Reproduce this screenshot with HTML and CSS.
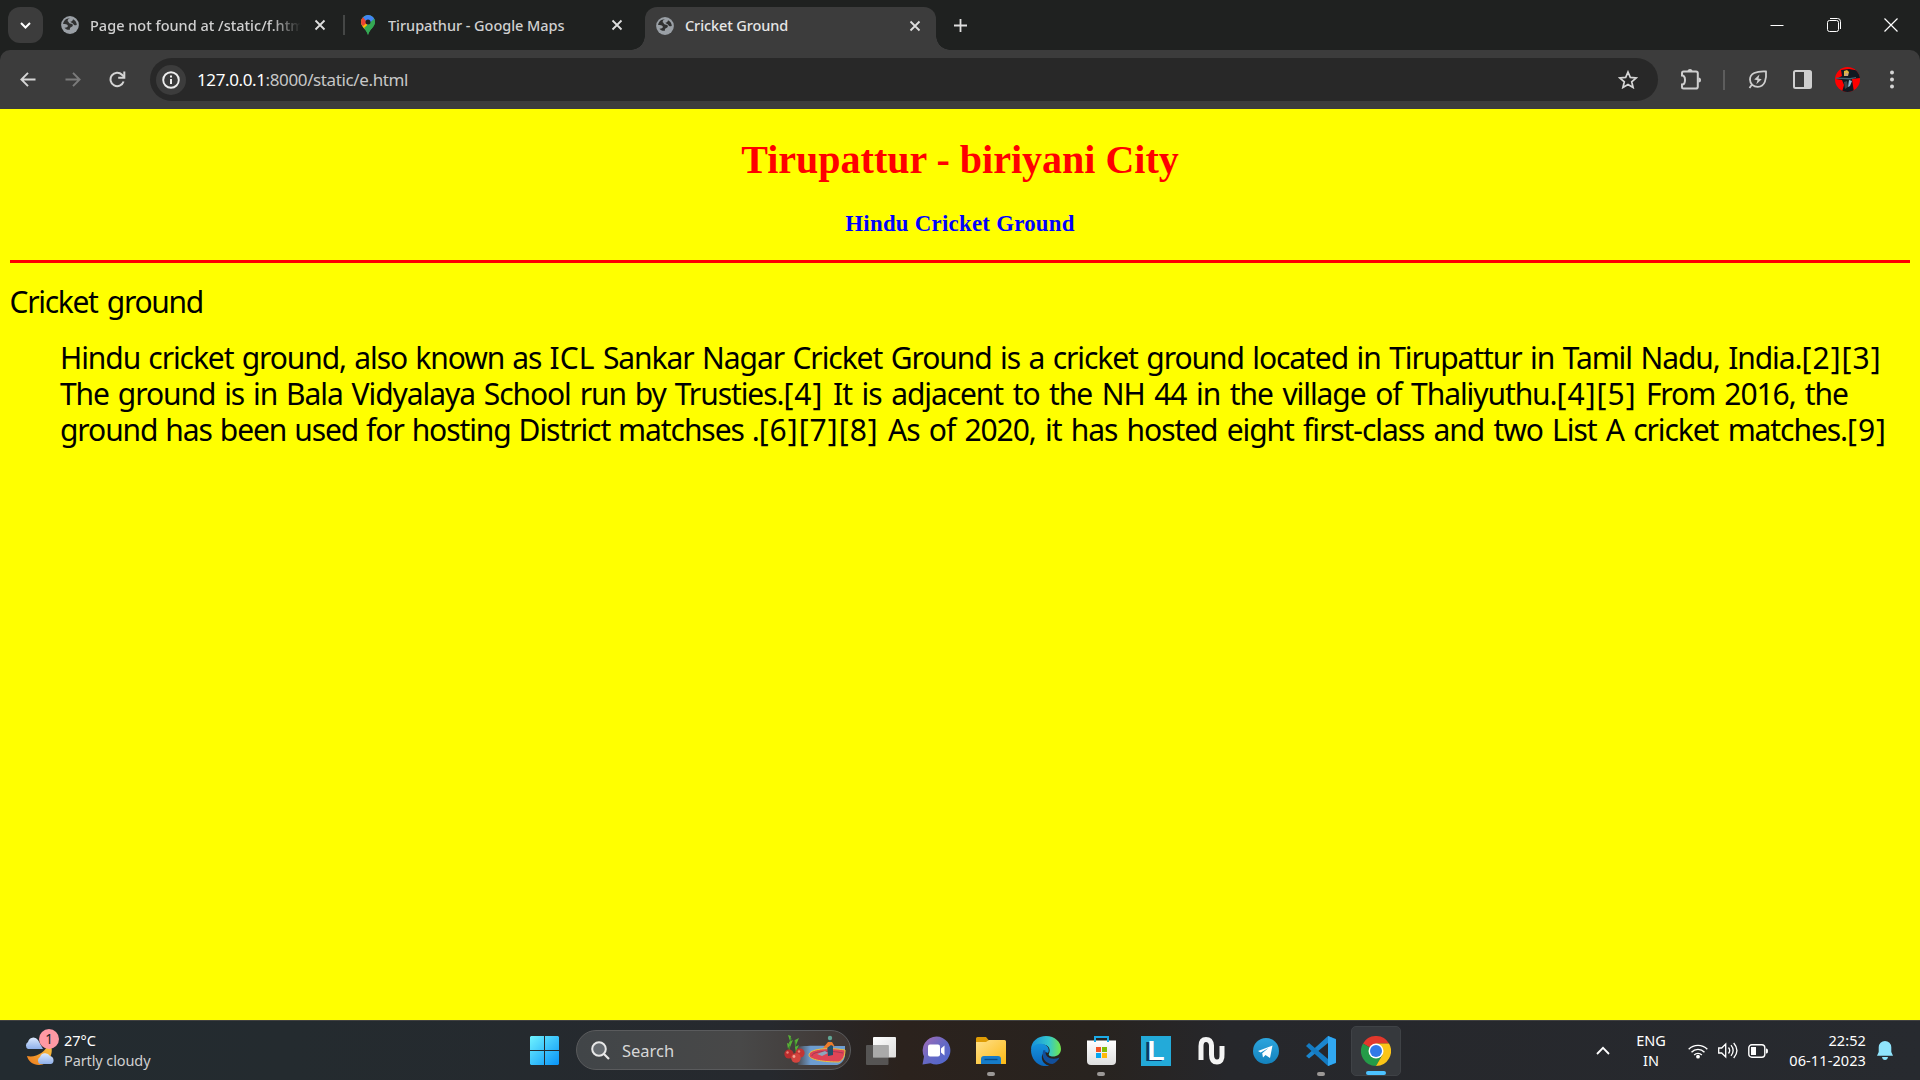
FILE: index.html
```html
<!DOCTYPE html>
<html lang="en">
<head>
<meta charset="utf-8">
<title>Cricket Ground</title>
<link rel="stylesheet" href="styles.css">
</head>
<body>
<svg class="defs" width="0" height="0">
  <defs>
    <symbol id="globe" viewBox="0 0 18 18"><circle cx="9" cy="9" r="8.9" fill="#9aa0a6"/><path d="M9 2.2c-1.9.6-2.5 1.9-2.3 3.1 1.5.3.7 2 2.2 2.3 1.900.2 3.300.4 2.900 2.200-.4 1.500-2.500 1.100-2.900 2.400l.1 1.400c-2 .6-4.400-.3-5.600-1.900 1.900.1 3.300-.4 3.500-1.900C6.500 8.200 4.100 8.100 2.100 8 2.300 4.900 5 2 9 2.200zM12 3.200c2.300 1 3.800 3.300 3.800 5.600-1.300 1-3 .4-3.500-.9-.5-1.200-2.800-.7-2.800-2.300 1.300 0 2.300-.9 2.500-2.400z" fill="#303131"/></symbol>
    <symbol id="x" viewBox="0 0 12 12"><path d="M1.500 1.500l9 9m0-9l-9 9" stroke="#dedede" stroke-width="1.800"/></symbol>
  </defs>
</svg>
<div class="screen">
  <header class="tabs">
    <div class="tab-search"><svg width="11" height="7" viewBox="0 0 11 7"><path d="M1 1l4.500 4.500L10 1" fill="none" stroke="#fff" stroke-width="2"/></svg></div>
    <div class="tab tab-one">
      <svg class="fav" width="18" height="18"><use href="#globe"/></svg>
      <span class="tab-title fade">Page not found at /static/f.htm</span>
      <svg class="close" width="12" height="12"><use href="#x"/></svg>
    </div>
    <i class="tab-sep"></i>
    <div class="tab tab-two">
      <svg class="fav" width="14" height="20" viewBox="0 0 14 20"><defs><clipPath id="pin"><path d="M7 0a7 7 0 0 1 7 7c0 5-5.500 7-7 13C5.500 14 0 12 0 7a7 7 0 0 1 7-7z"/></clipPath></defs><g clip-path="url(#pin)"><path fill="#34a853" d="M0 0h14v20H0z"/><path fill="#fbbc04" d="M0 4l10 3-7 9-5-5z"/><path fill="#ea4335" d="M0 0l7 7-5 4-4-3z"/><path fill="#4285f4" d="M2 2L7-1l7 3v3L7 12 5 6z"/><path fill="#34a853" d="M14 3v17H5L3 13z"/></g><circle cx="7" cy="7" r="2.500" fill="#202120"/></svg>
      <span class="tab-title">Tirupathur - Google Maps</span>
      <svg class="close" width="12" height="12"><use href="#x"/></svg>
    </div>
    <div class="tab active">
      <svg class="fav" width="18" height="18"><use href="#globe"/></svg>
      <span class="tab-title">Cricket Ground</span>
      <svg class="close" width="12" height="12"><use href="#x"/></svg>
    </div>
    <svg class="new-tab" width="13" height="13" viewBox="0 0 13 13"><path d="M6.500 0v13M0 6.500h13" stroke="#dedede" stroke-width="1.800"/></svg>
    <div class="window-buttons">
      <svg width="14" height="14" viewBox="0 0 14 14"><path d="M.5 7.500h13" stroke="#fff"/></svg>
      <svg width="14" height="14" viewBox="0 0 14 14"><rect x=".5" y="2.500" width="11" height="11" rx="2" fill="none" stroke="#fff"/><path d="M3 .5h7.500a3 3 0 0 1 3 3V11" fill="none" stroke="#fff"/></svg>
      <svg width="14" height="14" viewBox="0 0 14 14"><path d="M.5.5l13 13m0-13l-13 13" stroke="#fff" stroke-width="1.200"/></svg>
    </div>
  </header>
  <nav class="toolbar">
    <svg class="back" width="16" height="15" viewBox="0 0 16 15"><path d="M15.500 7.500H1.500M8 .8L1.400 7.500 8 14.200" fill="none" stroke="#d5d5d5" stroke-width="1.900"/></svg>
    <svg class="forward" width="16" height="15" viewBox="0 0 16 15"><path d="M.5 7.500h14M8 .8l6.600 6.700L8 14.200" fill="none" stroke="#7b7b7b" stroke-width="1.900"/></svg>
    <svg class="reload" width="17" height="17" viewBox="0 0 17 17"><path d="M14.600 10.500A6.700 6.700 0 1 1 13 3.700l2 2" fill="none" stroke="#d5d5d5" stroke-width="2"/><path d="M15.300.5v6.200H9.200" fill="none" stroke="#d5d5d5" stroke-width="2"/></svg>
    <div class="omnibox">
      <span class="info"><svg width="18" height="18" viewBox="0 0 18 18"><circle cx="9" cy="9" r="7.800" fill="none" stroke="#eee" stroke-width="1.900"/><path d="M9 8v5M9 4.600v2" stroke="#eee" stroke-width="2"/></svg></span>
      <span class="url"><b>127.0.0.1</b>:8000/static/e.html</span>
      <svg class="star" width="20" height="19" viewBox="0 0 20 19"><path d="M10 2l2.300 5.400 5.900.5-4.500 3.900 1.400 5.700L10 14.500l-5.100 3 1.400-5.700L1.800 7.900l5.900-.5z" fill="none" stroke="#d5d5d5" stroke-width="1.700"/></svg>
    </div>
    <svg class="ext" width="22" height="21" viewBox="0 0 22 21"><path d="M2 7V4.500Q2 3 3.500 3H16q1.800 0 1.800 1.800v13.400Q17.800 20 16 20H3.500Q2 20 2 18.500V16c4 0 4-9 0-9z" transform="translate(0 -.5)" fill="none" stroke="#cfcfcf" stroke-width="2"/><path d="M7.500 2.500a2.500 2.500 0 0 1 5 0zM18.500 8.500a2.500 2.500 0 0 1 0 5z" fill="#cfcfcf"/></svg>
    <i class="bar-sep"></i>
    <svg class="leaf" width="20" height="19" viewBox="0 0 20 19"><path d="M18 1.500c.6 7-.8 15.300-8.200 15.300C5.500 16.800 2 14 2 9.500 2 3.500 8 1 18 1.500zM3.800 14.800L1.500 18" fill="none" stroke="#cfcfcf" stroke-width="1.800"/><path d="M11.500 4.500L6.200 9.500l3.300.7-1.200 4 5.400-5-3.300-.8z" fill="#cfcfcf"/></svg>
    <svg class="panel" width="19" height="19" viewBox="0 0 19 19"><rect x="1" y="1" width="17" height="17" rx="1.500" fill="none" stroke="#cfcfcf" stroke-width="2"/><path d="M11 1h7v17h-7z" fill="#cfcfcf"/></svg>
    <svg class="avatar" width="25" height="25" viewBox="0 0 25 25"><defs><clipPath id="av"><circle cx="12.500" cy="12.500" r="12.500"/></clipPath></defs><g clip-path="url(#av)"><path fill="#f00" d="M0 0h25v25H0z"/><path fill="#101820" d="M6 3l8-1 11 2v7l-8 1 1 7 1 6H7l2-7-2-5-6-1 6-3z"/><path fill="#e0b53f" d="M9 4l3-1 2 2-1 4H9z"/><path fill="#cda27d" d="M10 6h3v3h-3z"/><path fill="#47616f" d="M1 10.500l14 .5 6-1v1l-6 1.500-14-.8z"/><path fill="#8eb8cf" d="M14 13l3 1-2 5-2 1z"/><path fill="#3b444a" d="M9 15l3-1 1 6-3 2z"/></g></svg>
    <svg class="more" width="4" height="19" viewBox="0 0 4 19" fill="#d5d5d5"><circle cx="2" cy="2.500" r="2"/><circle cx="2" cy="9.500" r="2"/><circle cx="2" cy="16.500" r="2"/></svg>
  </nav>
  <main class="page">
    <h1>Tirupattur - biriyani City</h1>
    <h3>Hindu Cricket Ground</h3>
    <hr>
    <p class="term">Cricket ground</p>
    <p class="text">
      <span class="w15">Hindu cricket ground, also known as <span class="caps">ICL</span></span><span class="w18"> Sankar Nagar Cricket Ground is a cricket ground located in Tirupattur in Tamil Nadu, India.</span><span class="cite">[2][3]</span><br>
      <span class="w22">The ground is in Bala Vidyalaya School run by Trusties.</span><span class="cite">[4]</span><span class="w29"> It is adjacent to the NH 44 in the village of Thaliyuthu.</span><span class="cite">[4][5]</span><span class="w25"> From 2016, the</span><br>
      <span class="w12">ground has been used for hosting District matchses .</span><span class="cite">[6][7][8]</span><span class="w26"> As of 2020, it has hosted eight first-class and two List A cricket matches.</span><span class="cite">[9]</span>
    </p>
  </main>
  <footer class="taskbar">
    <div class="weather">
      <div class="weather-icon">
        <svg width="32" height="30" viewBox="0 0 32 30"><defs><linearGradient id="moon" x1="1" y1="0" x2="0" y2="1"><stop stop-color="#f9c945"/><stop offset="1" stop-color="#ee7a1c"/></linearGradient><linearGradient id="cl" x1="0" y1="0" x2="0" y2="1"><stop stop-color="#dbe9fd"/><stop offset="1" stop-color="#8fb0ea"/></linearGradient></defs><path d="M25 5c7 9 0 23-10 23C9 28 4 24 3 19c8 2 19-3 22-14z" fill="url(#moon)"/><path d="M4 12a4 4 0 0 1 0-7 5.500 5.500 0 0 1 10-2l5 9z" fill="url(#cl)"/><path d="M16 27a4 4 0 0 1 0-7 5.500 5.500 0 0 1 10-1 4.200 4.200 0 0 1 1 8z" fill="url(#cl)"/></svg>
        <span class="badge">1</span>
      </div>
      <div class="weather-text"><div class="temp">27°C</div><div class="cond">Partly cloudy</div></div>
    </div>
    <div class="apps">
      <div class="app start"><svg width="29" height="29" viewBox="0 0 29 29"><defs><linearGradient id="win" x1="0" y1="0" x2="1" y2="1"><stop stop-color="#6ff3ff"/><stop offset="1" stop-color="#0893f7"/></linearGradient></defs><path d="M1 0h13v14H0V1zM15 0h13l1 1v13H15zM0 15h14v14H1l-1-1zM15 15h14v13l-1 1H15z" fill="url(#win)"/></svg></div>
      <div class="search">
        <svg class="lens" width="19" height="19" viewBox="0 0 19 19"><circle cx="8" cy="8" r="6.800" fill="#666b70" stroke="#e8e8e8" stroke-width="2"/><path d="M13 13l5 5" stroke="#e8e8e8" stroke-width="2.200"/></svg>
        <span class="search-label">Search</span>
        <svg class="art" width="62" height="33" viewBox="0 0 62 33"><defs><linearGradient id="sea"><stop stop-color="#78a4d2" stop-opacity="0"/><stop offset=".3" stop-color="#6d9dd0"/></linearGradient></defs><path d="M12 13c8-2 30-1 49-1v10c-1 5-4 8-8 9H14z" fill="url(#sea)"/><path d="M61 16c-18-3-36-1-36 5 0 5 15 7 30 7 4-2 6-6 6-12z" fill="#df4456" stroke="#eac43c"/><path d="M28 22c0-5 18-6 31-3" fill="none" stroke="#8e3855" stroke-width=".8"/><path d="M43 11l3-5 3 5v10l-5 1z" fill="#234e68"/><path d="M39 14l5-6h4l3 5-4-2-4 3z" fill="#ed7b2a"/><circle cx="46" cy="4" r="2.200" fill="#62a493"/><path d="M33 20l8-3 3 2-6 3z" fill="#8ca7bd"/><path d="M5 17L7 4m5 14l-1-12" stroke="#3b8a2f" stroke-width="1.200"/><path d="M4 1l3 1-1 5zM9 6l-4 2 1 5zM3 9l3 1-2 5zM15 4l-4 2 1 5zM15 11l-4 2 1 4z" fill="#59b336"/><circle cx="5" cy="20" r="4.600" fill="#b92d2e"/><circle cx="16" cy="19" r="4.600" fill="#c23533"/><circle cx="12" cy="24" r="4.800" fill="#d3443e"/><circle cx="10" cy="22.500" r="1.400" fill="#f3a594"/><circle cx="3.500" cy="18.500" r="1.200" fill="#e98375"/><circle cx="15" cy="17.500" r="1.200" fill="#e98375"/></svg>
      </div>
      <div class="app"><svg width="30" height="28" viewBox="0 0 30 28"><defs><linearGradient id="tv" x1="0" y1="0" x2="1" y2="1"><stop stop-color="#fff"/><stop offset="1" stop-color="#ddd"/></linearGradient></defs><rect x="7" y="0" width="23" height="20.500" rx="1" fill="url(#tv)"/><rect y="8" width="22.500" height="20" rx="1" fill="#666" fill-opacity=".75"/><rect x="7" y="8" width="15.500" height="12.500" fill="#aaa"/></svg></div>
      <div class="app"><svg width="29" height="29" viewBox="0 0 29 29"><defs><linearGradient id="chat" x1="0" y1="0" x2="1" y2="1"><stop stop-color="#a66bb5"/><stop offset=".5" stop-color="#6669c4"/><stop offset="1" stop-color="#4c66cf"/></linearGradient></defs><path d="M14.500.5a14 14 0 1 1-6 26.700L.5 28.500l1.500-8A14 14 0 0 1 14.500.5z" fill="url(#chat)"/><rect x="6" y="8.500" width="12" height="12" rx="2" fill="#fff"/><path d="M19 12.500l3.500-3v10l-3.500-3z" fill="#fff"/></svg></div>
      <div class="app"><svg width="30" height="27" viewBox="0 0 30 27"><defs><linearGradient id="fold" x1="0" y1="0" x2="1" y2="1"><stop stop-color="#ffe08a"/><stop offset="1" stop-color="#fbb914"/></linearGradient></defs><path d="M0 1.500Q0 0 1.500 0H10l3 3.500h15V8H0z" fill="#df9c05"/><path d="M0 5h10l3-2h15.500Q30 3 30 4.500V27H0z" fill="url(#fold)"/><path d="M5 27v-5q0-3 3-3h14q3 0 3 3v5z" fill="#167cc9"/><path d="M8.500 22.500h13" stroke="#064c87" stroke-width="1.300"/></svg><i class="run"></i></div>
      <div class="app"><svg width="30" height="30" viewBox="0 0 30 30"><defs><linearGradient id="e1"><stop stop-color="#1590dc"/><stop offset=".6" stop-color="#35c7cc"/><stop offset="1" stop-color="#72e748"/></linearGradient><linearGradient id="e2" x1="0" y1="0" x2="0" y2="1"><stop stop-color="#1594de"/><stop offset="1" stop-color="#0b67bd"/></linearGradient></defs><path d="M0 14C0 5 7 0 15 0c9 0 15 6 15 13 0 5-4 7.500-8 7.500-3 0-5-1-4-3 2-4 0-9-7-9-5 0-9 2-11 5.500z" fill="url(#e1)"/><path d="M0 14C2 8 8 7 12 8c5 1 7 6 5 9-3-2-7 1-6 6 1 4 4 6 7 6.700C8 32 0 24 0 14z" fill="url(#e2)"/><path d="M12.500 14c-3 7 2 14 9 14 3-1 6-4 7-6.500-7 3-15 .5-14-7z" fill="#124f9b"/></svg></div>
      <div class="app"><svg width="29" height="29" viewBox="0 0 29 29"><defs><linearGradient id="bag" x1="0" y1="0" x2="0" y2="1"><stop stop-color="#fff"/><stop offset="1" stop-color="#dedede"/></linearGradient></defs><path d="M0 4.500h29V25q0 4-4 4H4q-4 0-4-4z" fill="url(#bag)"/><path d="M8 6V1h13v5" fill="none" stroke="#1cabe7" stroke-width="2"/><path d="M9 11h5v5H9z" fill="#f35325"/><path d="M15 11h5v5h-5z" fill="#81bc06"/><path d="M9 17h5v5H9z" fill="#05a6f0"/><path d="M15 17h5v5h-5z" fill="#ffba08"/></svg><i class="run"></i></div>
      <div class="app"><span class="l-app">L</span></div>
      <div class="app"><svg width="27" height="28" viewBox="0 0 27 28"><path d="M3 23V9q0-6.500 5-6.500t5.500 6v9Q13.500 25 19 25t5-7.500V9" fill="none" stroke="#f4f4f4" stroke-width="5"/></svg></div>
      <div class="app"><svg width="26" height="26" viewBox="0 0 26 26"><defs><linearGradient id="tg" x1="0" y1="0" x2="0" y2="1"><stop stop-color="#2ca5de"/><stop offset="1" stop-color="#1482bd"/></linearGradient></defs><circle cx="13" cy="13" r="13" fill="url(#tg)"/><path d="M5 13l14.500-5.500L17 20l-4.500-3-2.500 2.500-.8-4.200L15.500 10l-7.800 4.500z" fill="#fff"/></svg></div>
      <div class="app"><svg width="30" height="30" viewBox="0 0 30 30"><path d="M22 0l8 3v24l-8 3V7L3 22.500 0 20z" fill="#1b86cf"/><path d="M0 10l3-3 19 16v7L0 10z" fill="#147bc2"/><path d="M22 0l8 3.500v23L22 30z" fill="#31a8f2"/></svg><i class="run"></i></div>
      <div class="app current"><svg width="30" height="30" viewBox="0 0 30 30"><path d="M15 15L2 7.500A15 15 0 0 1 28 7.500H15z" fill="#e2382c"/><path d="M15 15l6.500 3.700L15 30A15 15 0 0 1 2 7.500z" fill="#249b48"/><path d="M15 7.500h13A15 15 0 0 1 15 30l6.500-11.300z" fill="#fbc517"/><circle cx="15" cy="15" r="7.500" fill="#fff"/><circle cx="15" cy="15" r="6" fill="#3079e8"/></svg><i class="run"></i></div>
    </div>
    <div class="tray">
      <svg class="chev" width="14" height="9" viewBox="0 0 14 9"><path d="M1 8l6-6.200L13 8" fill="none" stroke="#fff" stroke-width="1.800"/></svg>
      <div class="lang"><div>ENG</div><div>IN</div></div>
      <svg class="wifi" width="20" height="16" viewBox="0 0 20 16"><path d="M.7 6.300a13 13 0 0 1 18.600 0M3.500 9.200a9 9 0 0 1 13 0M6.200 12a5.300 5.300 0 0 1 7.600 0" fill="none" stroke="#fff" stroke-width="1.400"/><circle cx="10" cy="13.700" r="1.900" fill="#fff"/></svg>
      <svg class="vol" width="20" height="17" viewBox="0 0 20 17"><path d="M.7 6v5h3l4 4V2l-4 4zM10.500 5.500q2.400 3 0 6M13 3.200q4.300 5.300 0 10.600M15.700 1q6.500 7.500 0 15" fill="none" stroke="#fff" stroke-width="1.300"/></svg>
      <svg class="bat" width="20" height="14" viewBox="0 0 20 14"><rect x=".8" y=".8" width="16" height="12.400" rx="3" fill="none" stroke="#fff" stroke-width="1.400"/><path d="M3 3h5v8H3z" fill="#fff"/><path d="M18 4.500h.5q1.500 0 1.500 2.500t-1.500 2.500H18z" fill="#fff"/></svg>
      <div class="clock"><div>22:52</div><div>06-11-2023</div></div>
      <svg class="bell" width="16" height="19" viewBox="0 0 16 19"><path d="M8 0a6.300 6.300 0 0 1 6.300 6.300V11L16 14.800H0L1.700 11V6.300A6.300 6.300 0 0 1 8 0zM5 16h6q-.5 3-3 3t-3-3z" fill="#8fe4fc"/></svg>
    </div>
  </footer>
</div>
</body>
</html>
```
FILE: styles.css
```css
* { box-sizing: border-box; }
body { margin: 0; overflow: hidden; background: #1f2120; }
.defs { position: absolute; }
svg { display: block; flex: none; }
.screen { width: 1920px; height: 1080px; display: flex; flex-direction: column; font-family: "Noto Sans", sans-serif; }

.tabs { height: 50px; flex: none; display: flex; align-items: center; background: #1f2120; color: #dedede; font-size: 14.500px; white-space: nowrap; }
.tab-search { width: 35px; height: 36px; margin-left: 8px; border-radius: 12px; background: #3c3c3c; display: flex; align-items: center; justify-content: center; }
.tab { height: 43px; display: flex; align-items: center; }
.tab-one { margin-left: 18px; width: 282px; }
.tab-title { margin-left: 11px; overflow: hidden; flex: 1; color: #d0d0d0; font-weight: 500; }
.fade { flex: none; width: 211px; -webkit-mask-image: linear-gradient(90deg, #000 86%, transparent 100%); mask-image: linear-gradient(90deg, #000 86%, transparent 100%); }
.tab-one .close { margin-left: 13px; }
.tab-sep { width: 2px; height: 20px; background: #454746; }
.tab-two { width: 262px; margin-left: 16px; }
.tab-two .tab-title { margin-left: 13px; letter-spacing: -.04px; }
.active { position: relative; align-self: flex-end; margin-left: 22px; width: 291px; padding: 0 15px 8px 11px; border-radius: 12px 12px 0 0; background: #3c3c3c; }
.active .fav, .active .close { margin-top: 2px; }
.active .tab-title { color: #e6e6e6; letter-spacing: -.1px; }
.active::before, .active::after { content: ""; position: absolute; bottom: 0; width: 14px; height: 14px; }
.active::before { left: -14px; background: radial-gradient(circle at 0 0, transparent 13.500px, #3c3c3c 14px); }
.active::after { right: -14px; background: radial-gradient(circle at 100% 0, transparent 13.500px, #3c3c3c 14px); }
.new-tab { margin-left: 18px; }
.window-buttons { margin-left: auto; display: flex; gap: 43px; padding-right: 22px; }

.toolbar { height: 59px; flex: none; display: flex; align-items: center; background: #3c3c3c; border-radius: 10px 10px 0 0; padding-left: 20px; }
.forward { margin-left: 29px; }
.reload { margin-left: 28px; }
.omnibox { width: 1508px; height: 43px; margin-left: 24px; border-radius: 22px; background: #282828; display: flex; align-items: center; padding: 0 20px 0 6px; }
.info { width: 30px; height: 30px; border-radius: 50%; background: #3c3c3c; display: flex; align-items: center; justify-content: center; }
.url { flex: 1; margin-left: 11px; font-size: 17px; letter-spacing: -.38px; color: #c7c7c7; white-space: nowrap; }
.url b { font-weight: 400; color: #fff; }
.ext { margin-left: 22px; }
.bar-sep { width: 2px; height: 20px; margin-left: 21px; background: #5d5d5d; }
.leaf { margin-left: 23px; }
.panel { margin-left: 25px; }
.avatar { margin-left: 23px; }
.more { margin-left: 30px; }

.page { flex: 1; background: #ff0; padding: 0 10px; overflow: hidden; }
h1, h3 { font-family: "Liberation Serif", "Times New Roman", serif; text-align: center; white-space: nowrap; }
h1 { margin: 28px 0 0; font-size: 40px; line-height: 46px; color: #f00; }
h3 { margin: 27px 0 0; font-size: 22.800px; letter-spacing: .28px; line-height: 28px; color: #00f; }
hr { height: 3px; margin: 22px 0 0; border: 0; background: #f00; }
.term, .text { margin: 0; font-size: 30px; letter-spacing: -1.080px; line-height: 36px; color: #000; white-space: nowrap; font-variant-ligatures: none; }
.term { margin-top: 21px; letter-spacing: -1.320px; word-spacing: 2.800px; text-indent: -.5px; }
.text { margin: 20px 0 0 50px; }
.cite { letter-spacing: 1.050px; }
.caps { letter-spacing: 0; }
.w12 { word-spacing: 1.200px; }
.w15 { word-spacing: 1.500px; }
.w18 { word-spacing: 1.780px; }
.w22 { word-spacing: 2.200px; }
.w25 { word-spacing: 2.500px; }
.w26 { word-spacing: 2.600px; }
.w29 { word-spacing: 2.900px; }

.taskbar { height: 60px; flex: none; display: grid; grid-template-columns: 519px 1fr 346px; align-items: center; border-top: 1px solid #414141; background: linear-gradient(90deg, #232b30 0, #242b2f 15%, #26292e 40%, #2b221d 47%, #28231f 57%, #26272b 64%, #272a2f 100%); color: #fff; font-size: 14.500px; white-space: nowrap; }
.weather { display: flex; padding-left: 24px; }
.weather-icon { position: relative; width: 40px; padding-top: 7px; }
.badge { position: absolute; left: 15px; top: -1px; width: 20px; height: 20px; border-radius: 50%; background: #ff99a4; color: #222; font-size: 13.500px; line-height: 20px; text-align: center; }
.weather-text div, .lang div, .clock div { line-height: 20px; }
.weather-text, .clock { padding-bottom: 2px; }
.lang { padding-bottom: 2px; }
.cond { color: #cfcfcf; letter-spacing: -.1px; }
.apps { display: flex; align-items: center; gap: 5px; }
.app { position: relative; width: 50px; height: 50px; border-radius: 5px; display: flex; align-items: center; justify-content: center; }
.current { background: #36393d; border: 1px solid #3f4246; }
.run { position: absolute; left: 21px; bottom: 0; width: 8px; height: 4px; border-radius: 2px; background: #9b9896; }
.current .run { left: 14px; width: 20px; background: #4cc2ff; }
.search { width: 275px; height: 40px; margin: 0 0 1px 2px; border: 1px solid #5a5b5d; border-radius: 20px; background: linear-gradient(90deg, #414548, #484848 60%, #3f3734); display: flex; align-items: center; padding: 0 4px 0 14px; }
.search-label { flex: 1; margin-left: 12px; font-size: 16.500px; color: #d7d7d7; }
.l-app { width: 30px; height: 30px; background: #23aad9; color: #fff; font: bold 28px/29px "Liberation Sans", sans-serif; text-align: center; text-shadow: -2px 1px #0b3765, -3px 1px #0b3765; }
.tray { display: flex; align-items: center; padding-left: 22px; }
.lang { width: 60px; margin-left: 11px; text-align: center; }
.wifi { margin-left: 7px; }
.vol, .bat { margin-left: 10px; }
.clock { width: 98px; text-align: right; letter-spacing: .1px; }
.bell { margin-left: 11px; }
```
